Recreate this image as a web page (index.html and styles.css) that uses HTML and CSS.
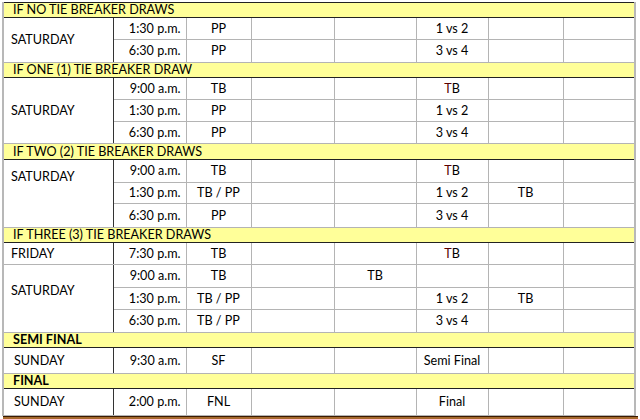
FILE: index.html
```html
<!DOCTYPE html>
<html>
<head>
<meta charset="utf-8">
<link rel="stylesheet" href="styles.css">
</head>
<body>
<div class="sheet">
<table class="sched">
<colgroup>
<col class="c1"><col class="c2"><col class="c3"><col class="c4"><col class="c5"><col class="c6"><col class="c7"><col class="c8">
</colgroup>
<tbody>
<tr class="hd h15"><td colspan="8">IF NO TIE BREAKER DRAWS</td></tr>
<tr class="h22"><td class="day" rowspan="2">SATURDAY</td><td class="tm">1:30 p.m.</td><td class="ct bk">PP</td><td></td><td></td><td class="ct bk">1 vs 2</td><td></td><td></td></tr>
<tr class="h23"><td class="tm">6:30 p.m.</td><td class="ct bk">PP</td><td></td><td></td><td class="ct bk">3 vs 4</td><td></td><td></td></tr>

<tr class="hd h15"><td colspan="8">IF ONE (1) TIE BREAKER DRAW</td></tr>
<tr class="h22"><td class="day" rowspan="3">SATURDAY</td><td class="tm">9:00 a.m.</td><td class="ct bk">TB</td><td></td><td></td><td class="ct bk"><span class="red">T</span>B</td><td></td><td></td></tr>
<tr class="h22 dk"><td class="tm">1:30 p.m.</td><td class="ct bk">PP</td><td></td><td></td><td class="ct bk">1 vs 2</td><td></td><td></td></tr>
<tr class="h22 dk"><td class="tm">6:30 p.m.</td><td class="ct bk">PP</td><td></td><td></td><td class="ct bk">3 vs 4</td><td></td><td></td></tr>

<tr class="hd h16"><td colspan="8">IF TWO (2) TIE BREAKER DRAWS</td></tr>
<tr class="h23"><td class="day top" rowspan="3">SATURDAY</td><td class="tm">9:00 a.m.</td><td class="ct bk">TB</td><td></td><td></td><td class="ct bk"><span class="red">T</span>B</td><td></td><td></td></tr>
<tr class="h21"><td class="tm">1:30 p.m.</td><td class="ct bk">TB / PP</td><td></td><td></td><td class="ct bk">1 vs 2</td><td class="ct">TB</td><td></td></tr>
<tr class="h24 dk"><td class="tm">6:30 p.m.</td><td class="ct bk">PP</td><td></td><td></td><td class="ct bk">3 vs 4</td><td></td><td></td></tr>

<tr class="hd h14"><td colspan="8">IF THREE (3) TIE BREAKER DRAWS</td></tr>
<tr class="h22"><td class="day">FRIDAY</td><td class="tm">7:30 p.m.</td><td class="ct bk">TB</td><td></td><td></td><td class="ct bk"><span class="red">T</span>B</td><td></td><td></td></tr>
<tr class="h23"><td class="day top2" rowspan="3">SATURDAY</td><td class="tm">9:00 a.m.</td><td class="ct bk">TB</td><td></td><td class="ct">TB</td><td class="bk"></td><td></td><td></td></tr>
<tr class="h22"><td class="tm">1:30 p.m.</td><td class="ct bk">TB / PP</td><td></td><td></td><td class="ct bk">1 vs 2</td><td class="ct">TB</td><td></td></tr>
<tr class="h23 dk"><td class="tm">6:30 p.m.</td><td class="ct bk">TB / PP</td><td></td><td></td><td class="ct bk">3 vs 4</td><td></td><td></td></tr>

<tr class="hd h15"><td colspan="8" class="b">SEMI FINAL</td></tr>
<tr class="h26"><td class="day sun">SUNDAY</td><td class="tm">9:30 a.m.</td><td class="ct bk">SF</td><td></td><td></td><td class="ct bk">Semi Final</td><td></td><td></td></tr>

<tr class="hd h15"><td colspan="8" class="b">FINAL</td></tr>
<tr class="h27"><td class="day sun">SUNDAY</td><td class="tm">2:00 p.m.</td><td class="ct bk">FNL</td><td></td><td></td><td class="ct bk">Final</td><td></td><td></td></tr>
</tbody>
</table>
<div class="foot"></div>
</div>
</body>
</html>
```

FILE: styles.css
```css
html, body {
  margin: 0;
  padding: 0;
  background: #ffffff;
}

.sheet {
  width: 640px;
  height: 419px;
  overflow: hidden;
  padding: 2px 0 0 2px;
  box-sizing: border-box;
}

.sched {
  border-collapse: collapse;
  table-layout: fixed;
  width: 634px;
  font-family: Lato, "Open Sans", sans-serif;
  font-size: 12.6px;
  color: #000;
  border-left: 2px solid #b8b8b8;
  border-right: 2px solid #b8b8b8;
}

.c1 { width: 110px; }
.c2 { width: 73px; }
.c3 { width: 65px; }
.c4 { width: 83px; }
.c5 { width: 82px; }
.c6 { width: 72px; }
.c7 { width: 75px; }
.c8 { width: 72px; }

.sched td {
  border: 1px solid #b4b4b4;
  padding: 0 6px;
  vertical-align: middle;
  white-space: nowrap;
  overflow: hidden;
  line-height: 14px;
}

.sched tr.dk td { border-top-color: #222; }

.sched td.day { text-align: left; padding-left: 7px; border-right-color: #333; }
.sched td.day.sun { padding-left: 10px; }
.sched td.top { vertical-align: top; padding-top: 10px; }
.sched td.top2 { vertical-align: top; padding-top: 19px; }
.sched td.tm { text-align: right; padding-right: 5px; border-left-color: #333; }
.sched td.ct { text-align: center; padding: 0; }
.sched td.bk { border-left-color: #111; }

.sched tr.hd td {
  background: #ffff99;
  border-top: 1px solid #222;
  border-bottom: 1px solid #222;
  padding-left: 9px;
  color: #000;
}
.sched tr.hd td.b { font-weight: bold; }

.h14 td { height: 13px; }
.h15 td { height: 14px; }
.h16 td { height: 15px; }
.h21 td { height: 20px; }
.h22 td { height: 21px; }
.h23 td { height: 22px; }
.h24 td { height: 23px; }
.h26 td { height: 25px; }
.h27 td { height: 26px; }

.red { color: #5a0000; }

.foot {
  margin-left: 1px;
  width: 635px;
  height: 6px;
  background: #a5692d;
  border-top: 1px solid #3a1a00;
}
```
